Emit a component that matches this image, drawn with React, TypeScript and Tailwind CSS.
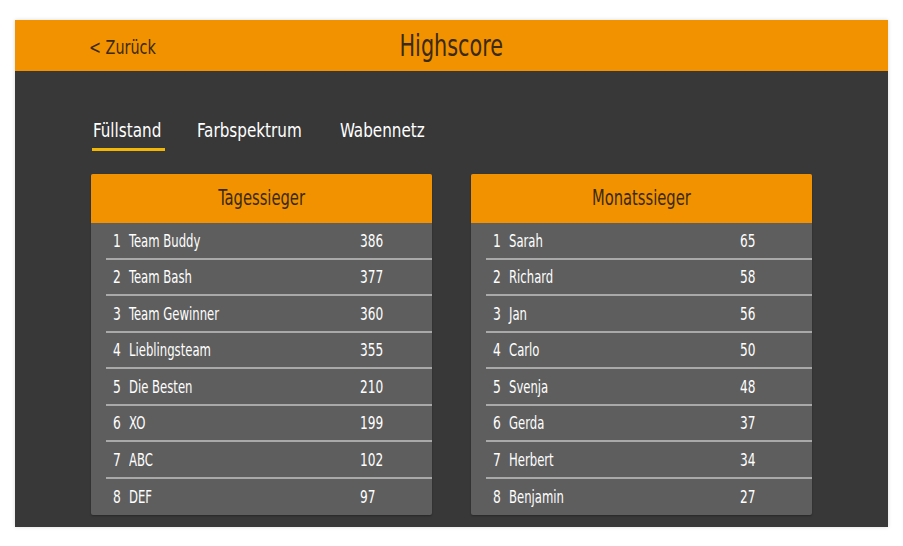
const TAGES = [
  { name: 'Team Buddy', score: 386 },
  { name: 'Team Bash', score: 377 },
  { name: 'Team Gewinner', score: 360 },
  { name: 'Lieblingsteam', score: 355 },
  { name: 'Die Besten', score: 210 },
  { name: 'XO', score: 199 },
  { name: 'ABC', score: 102 },
  { name: 'DEF', score: 97 },
];

const MONATS = [
  { name: 'Sarah', score: 65 },
  { name: 'Richard', score: 58 },
  { name: 'Jan', score: 56 },
  { name: 'Carlo', score: 50 },
  { name: 'Svenja', score: 48 },
  { name: 'Gerda', score: 37 },
  { name: 'Herbert', score: 34 },
  { name: 'Benjamin', score: 27 },
];

const TABS = ['Füllstand', 'Farbspektrum', 'Wabennetz'];

// the reference uses a tall narrow face; squeeze DejaVu Condensed to match
function ScoreTable({ title, rows }: { title: string; rows: { name: string; score: number }[] }) {
  return (
    <div className="w-[341px] overflow-hidden rounded-[2px] bg-[#5e5e5e] shadow-[0_1px_2px_rgba(0,0,0,0.3)]">
      <div className="flex h-[49px] items-center justify-center bg-[#f29200] text-[21px] text-[#3a2a12]">
        <span className="inline-block origin-center scale-x-[0.78]">{title}</span>
      </div>
      <ul>
        {rows.map((row, i) => (
          <li key={row.name} className="pl-[15px]">
            <div
              className={
                'flex h-[36.5px] items-center text-[18px] text-white ' +
                (i < rows.length - 1 ? 'border-b-2 border-[#a9a9a9]' : '')
              }
            >
              <span className="w-[23px] pl-[7px]">
                <span className="inline-block origin-left scale-x-[0.76]">{i + 1}</span>
              </span>
              <span className="w-[231px] whitespace-nowrap">
                <span className="inline-block origin-left scale-x-[0.72]">{row.name}</span>
              </span>
              <span className="inline-block origin-left scale-x-[0.75]">{row.score}</span>
            </div>
          </li>
        ))}
      </ul>
    </div>
  );
}

export default function App() {
  return (
    <div
      className="min-h-[546px] w-[903px] bg-white pt-[20px] pl-[15px]"
      style={{ fontFamily: '"DejaVu Sans Condensed", "Liberation Sans", sans-serif' }}
    >
      <div className="w-[873px] bg-[#383838] shadow-[0_0_4px_rgba(0,0,0,0.15)]">
        {/* header bar */}
        <div className="relative flex h-[51px] items-center justify-center bg-[#f29200]">
          <span className="absolute left-[74px] top-[13px] inline-block origin-left scale-x-[0.84] text-[19px] text-[#3a2a12]">
            &lt; Zurück
          </span>
          <h1 className="inline-block origin-center scale-x-[0.77] text-[30px] text-[#3a2a12]">Highscore</h1>
        </div>

        {/* tabs */}
        <div className="flex px-[77px] pt-[45px]">
          {TABS.map((tab, i) => (
            <div
              key={tab}
              className={'flex flex-col ' + (i === 0 ? 'w-[104px]' : i === 1 ? 'w-[143px]' : 'w-[100px]')}
            >
              <span className="inline-block origin-left scale-x-[0.89] whitespace-nowrap px-[1px] text-[19px] leading-[28px] text-white">
                {tab}
              </span>
              <span className={'mt-[4px] h-[3px] w-[73px] ' + (i === 0 ? 'bg-[#f2b705]' : 'bg-transparent')} />
            </div>
          ))}
        </div>

        {/* tables */}
        <div className="flex justify-center gap-[39px] pt-[23px] pb-[12px]">
          <ScoreTable title="Tagessieger" rows={TAGES} />
          <ScoreTable title="Monatssieger" rows={MONATS} />
        </div>
      </div>
    </div>
  );
}
